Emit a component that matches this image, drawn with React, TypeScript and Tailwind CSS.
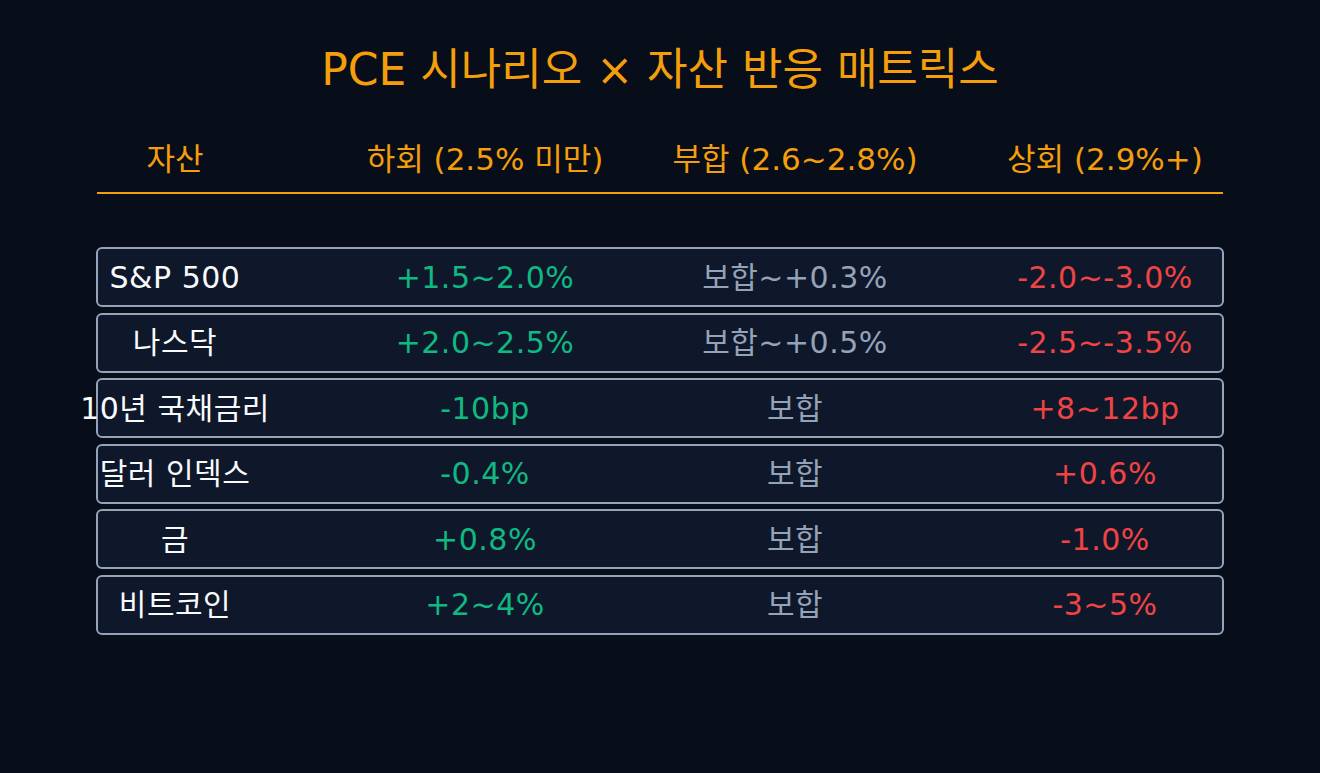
import type { ReactNode } from 'react'

type Tone = 'up' | 'flat' | 'down'

const TONE_CLASS: Record<Tone, string> = {
  up: 'text-[#10b981]',
  flat: 'text-[#94a3b8]',
  down: 'text-[#ef4444]',
}

const ROWS: { asset: string; below: string; inline: string; above: string; belowTone: Tone; aboveTone: Tone }[] = [
  { asset: 'S&P 500', below: '+1.5~2.0%', inline: '보합~+0.3%', above: '-2.0~-3.0%', belowTone: 'up', aboveTone: 'down' },
  { asset: '나스닥', below: '+2.0~2.5%', inline: '보합~+0.5%', above: '-2.5~-3.5%', belowTone: 'up', aboveTone: 'down' },
  { asset: '10년 국채금리', below: '-10bp', inline: '보합', above: '+8~12bp', belowTone: 'up', aboveTone: 'down' },
  { asset: '달러 인덱스', below: '-0.4%', inline: '보합', above: '+0.6%', belowTone: 'up', aboveTone: 'down' },
  { asset: '금', below: '+0.8%', inline: '보합', above: '-1.0%', belowTone: 'up', aboveTone: 'down' },
  { asset: '비트코인', below: '+2~4%', inline: '보합', above: '-3~5%', belowTone: 'up', aboveTone: 'down' },
]

/** Four-column line: narrow asset cell, then three scenario cells. */
function MatrixLine({ cells, className }: { cells: ReactNode[]; className?: string }) {
  return (
    <div className={`flex items-center ${className ?? ''}`}>
      <div className="w-[154px] shrink-0 flex justify-center whitespace-nowrap">{cells[0]}</div>
      <div className="ml-[118px] w-[850px] shrink-0 grid grid-cols-3 gap-x-[80px]">
        {cells.slice(1).map((c, i) => (
          <div key={i} className="flex justify-center whitespace-nowrap">
            {c}
          </div>
        ))}
      </div>
    </div>
  )
}

export default function App() {
  return (
    <div
      className="w-[1320px] h-[773px] bg-[#070d19] overflow-hidden"
      style={{ fontFamily: '"DejaVu Sans", "Noto Sans CJK KR", sans-serif' }}
    >
      <div className="w-[1128px] mx-auto pt-[40px]">
        <h1 className="text-center text-[44px] leading-[60px] text-[#f59e0b] font-normal">
          PCE 시나리오 × 자산 반응 매트릭스
        </h1>

        <div className="mt-[39px] mx-px border-b-2 border-[#f59e0b] pb-[13px] px-px">
          <MatrixLine
            className="h-[40px] text-[31px] text-[#f59e0b]"
            cells={['자산', '하회 (2.5% 미만)', '부합 (2.6~2.8%)', '상회 (2.9%+)']}
          />
        </div>

        <div className="mt-[53px] flex flex-col gap-[5.6px]">
          {ROWS.map((r) => (
            <div key={r.asset} className="h-[60px] rounded-[6px] border-2 border-[#94a3b8] bg-[#0f172a] flex items-center">
              <MatrixLine
                className="w-full text-[30px] tracking-[0.5px]"
                cells={[
                  <span className="text-[#f8fafc]">{r.asset}</span>,
                  <span className={TONE_CLASS[r.belowTone]}>{r.below}</span>,
                  <span className={TONE_CLASS.flat}>{r.inline}</span>,
                  <span className={TONE_CLASS[r.aboveTone]}>{r.above}</span>,
                ]}
              />
            </div>
          ))}
        </div>
      </div>
    </div>
  )
}
